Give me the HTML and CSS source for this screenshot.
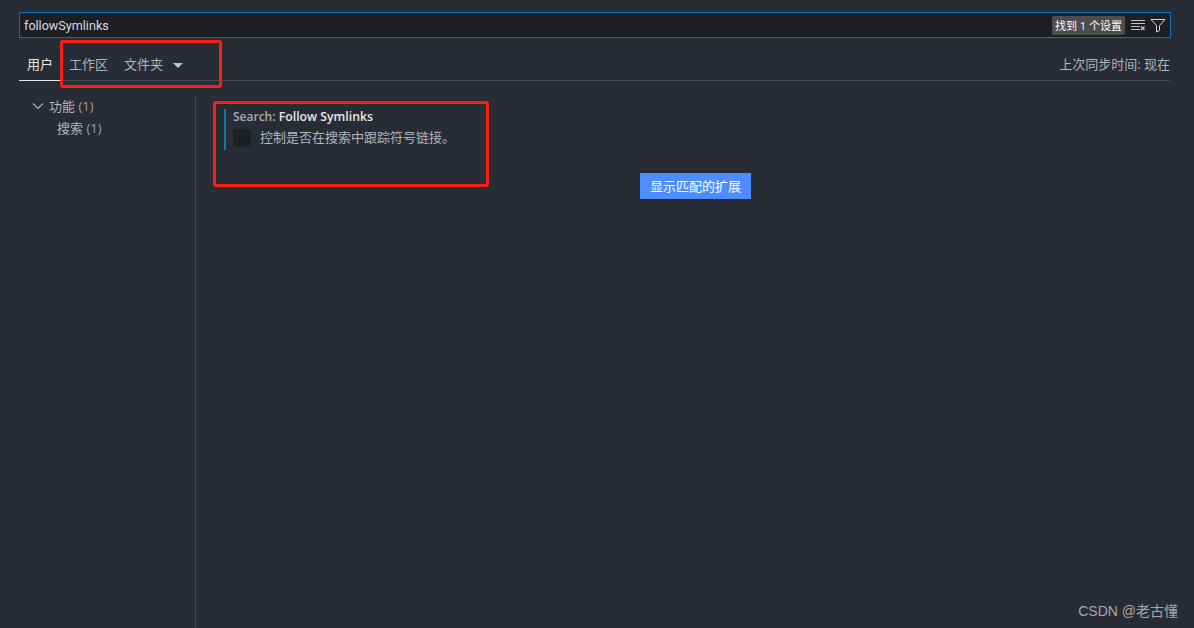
FILE: index.html
```html
<!DOCTYPE html>
<html>

<head>
	<title>设置</title>
	<meta charset="UTF-8">
	<link rel="stylesheet" href="styles.css">
</head>

<body>
	<div class="settings">
		<div class="search-box">
			<span class="search-text">followSymlinks</span>
			<span class="search-count">找到 1 个设置</span>
			<svg class="search-icon" width="16" height="16" viewBox="0 0 16 16" fill="none" stroke="#c5c5c5">
				<path d="M1 3.500h14M1 6.500h14M1 9.500h9M1 12.500h9" />
				<path d="M11 9.500l3.500 3.500M14.500 9.500L11 13" stroke-width="1.300" />
			</svg>
			<svg class="search-icon" width="16" height="16" viewBox="0 0 16 16" fill="none" stroke="#d4d4d4">
				<path d="M1 2.500h14l-5.500 6v5l-3 1.500v-6.500z" />
			</svg>
		</div>

		<div class="tabs">
			<span class="tab tab-active">用户</span>
			<span class="tab">工作区</span>
			<span class="tab">文件夹</span>
			<svg class="tab-caret" width="10" height="5" viewBox="0 0 10 5">
				<path d="M0 0h10L5 5z" fill="#c5c5c5" />
			</svg>
			<span class="sync-time">上次同步时间: 现在</span>
		</div>

		<div class="body-row">
			<div class="toc">
				<div class="toc-group">
					<svg width="12" height="12" viewBox="0 0 12 12" fill="none" stroke="#b4b4b4" stroke-width="1.100">
						<path d="M1 3.500l5 5 5-5" />
					</svg>
					<span>功能 <em>(1)</em></span>
				</div>
				<div class="toc-item">搜索 <em>(1)</em></div>
			</div>

			<div class="content">
				<div class="setting">
					<div class="setting-title">Search: <b>Follow Symlinks</b></div>
					<div class="setting-row">
						<span class="checkbox"></span>
						<span class="setting-desc">控制是否在搜索中跟踪符号链接。</span>
					</div>
				</div>
				<button class="ext-button" type="button">显示匹配的扩展</button>
			</div>
		</div>
	</div>

	<!-- red marker boxes drawn over the page -->
	<div class="marker marker-tabs"></div>
	<div class="marker marker-setting"></div>

	<div class="watermark">CSDN @老古懂</div>
</body>

</html>
```

FILE: styles.css
```css
* {
	box-sizing: border-box;
}

html,
body {
	height: 100%;
}

body {
	margin: 0;
	overflow: hidden;
	background-color: #282c34;
	color: #b2b5ba;
	font-family: "Open Sans", "Noto Sans CJK SC", sans-serif;
	font-size: 13px;
}

.settings {
	display: flex;
	flex-direction: column;
	height: 100%;
	padding: 12px 24px 0 19px;
}

.search-box {
	display: flex;
	align-items: center;
	height: 26px;
	margin-right: -1px;
	padding: 0 4px;
	border: 1px solid #0e70c0;
	background-color: #1d1f23;
	color: #d7dae0;
}

.search-text {
	flex: 1;
	font-family: Roboto, "Noto Sans CJK SC", sans-serif;
	font-size: 12.600px;
}

.search-count {
	margin-right: 1px;
	padding: 0 3px;
	border-radius: 2px;
	background-color: #4d4d4d;
	color: #ffffff;
	font-size: 11px;
	line-height: 19px;
}

.search-icon {
	margin-left: 4px;
	flex: none;
}

.tabs {
	display: flex;
	align-items: center;
	height: 43px;
	border-bottom: 1px solid #45484e;
	padding-top: 9px;
}

.tab {
	display: flex;
	align-items: center;
	height: 33px;
	padding: 0 8px;
	margin-bottom: -1px;
	border-bottom: 1px solid transparent;
}

.tab-active {
	color: #e7e7e7;
	border-bottom-color: #e7e7e7;
}

.tab-caret {
	margin: 3px 0 0 2px;
}

.sync-time {
	margin-left: auto;
}

.body-row {
	display: flex;
	flex: 1;
	padding-top: 15px;
}

.toc {
	width: 177px;
	border-right: 1px solid #45484e;
}

.toc-group {
	display: flex;
	align-items: center;
	gap: 5px;
	height: 23px;
	padding-left: 13px;
	margin-top: -2px;
}

.toc-item {
	height: 22px;
	line-height: 22px;
	padding-left: 38px;
}

.toc em {
	font-style: normal;
	color: #9da0a6;
}

.content {
	display: flex;
	flex: 1;
	flex-direction: column;
	align-items: center;
	margin-right: -24px;
}

.setting {
	align-self: flex-start;
	width: 260px;
	margin: 13px 0 0 28px;
	padding-left: 7px;
	border-left: 2px solid #0f7ba3;
	height: 41px;
}

.setting-title {
	font-size: 12px;
	font-weight: 600;
	line-height: 16px;
	color: #a9acb2;
}

.setting-title b {
	color: #e7e7e7;
	font-size: 12.300px;
	font-weight: 600;
}

.setting-row {
	display: flex;
	align-items: flex-start;
	gap: 9px;
	margin-top: 4px;
}

.setting-desc {
	line-height: 16px;
}

.checkbox {
	width: 18px;
	height: 18px;
	border: 1px solid #202226;
	border-radius: 3px;
	background-color: #1d1f23;
}

.ext-button {
	width: 111px;
	height: 26px;
	margin: 23px 0 0 1px;
	padding: 0 0 2px;
	border: 0;
	background-color: #4d8dff;
	color: #ffffff;
	font-family: inherit;
	font-size: 13px;
}

.marker {
	position: absolute;
	border: 3px solid #fb1e14;
	border-radius: 3px;
}

.marker-tabs {
	left: 60px;
	top: 40px;
	width: 162px;
	height: 48px;
}

.marker-setting {
	left: 213px;
	top: 101px;
	width: 276px;
	height: 86px;
}

.watermark {
	position: absolute;
	right: 16px;
	bottom: 8px;
	color: #a6a8ac;
	font-family: "Liberation Sans", "Noto Sans CJK SC", sans-serif;
	font-size: 14px;
}
```
